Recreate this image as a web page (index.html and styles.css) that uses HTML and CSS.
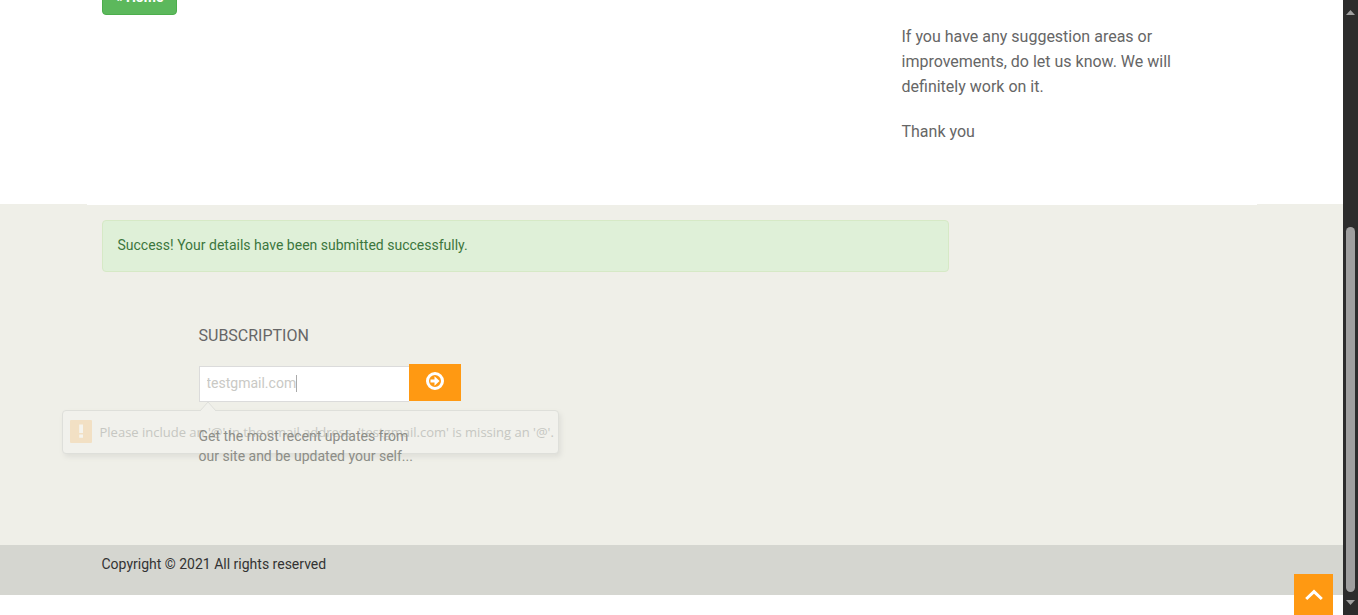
FILE: index.html
```html
<!DOCTYPE html>
<html lang="en">
<head>
<meta charset="utf-8">
<meta name="viewport" content="width=device-width, initial-scale=1">
<title>Feedback</title>
<link rel="stylesheet" href="styles.css">
</head>
<body>
<div class="window">
  <div class="page">
    <main class="top">
      <div class="container intro">
        <div class="intro-main"><button class="btn-home" type="button">« Home</button></div>
        <div class="intro-side">
          <p>If you have any suggestion areas or improvements, do let us know. We will definitely work on it.</p>
          <p>Thank you</p>
        </div>
      </div>
    </main>
    <section class="band">
      <div class="container">
        <div class="alert" role="alert">Success! Your details have been submitted successfully.</div>
        <div class="subscription">
          <h2><label for="email">SUBSCRIPTION</label></h2>
          <form class="subscribe" novalidate>
            <input id="email" class="email" type="email" value="testgmail.com">
            <span class="caret"></span>
            <button class="send" type="button" aria-label="Subscribe">
              <svg width="18" height="18" viewBox="0 0 18 18"><circle cx="9" cy="9" r="7.5" fill="none" stroke="#fff" stroke-width="3"/><path d="M4.5 7.5h4V4.2L13.6 9l-5.1 4.8v-3.3h-4z" fill="#fff"/></svg>
            </button>
            <div class="bubble">
              <svg class="bubble-tip" width="18" height="10" viewBox="0 0 18 10"><path d="M1 10 9 1l8 9" fill="#f1f1ec" stroke="#dedfda"/></svg>
              <svg width="22" height="23" viewBox="0 0 22 23"><rect width="22" height="23" rx="1" fill="#f2e0c4"/><path d="M9.2 4.5h3.8v8.5H9.2zM9.2 14.5h3.8v3.3H9.2z" fill="#f5f4ee"/></svg>
              <span class="bubble-text">Please include an '@' in the email address. 'testgmail.com' is missing an '@'.</span>
            </div>
          </form>
          <p class="note">Get the most recent updates from<br>our site and be updated your self...</p>
        </div>
      </div>
    </section>
    <footer class="footer"><div class="container footer-text">Copyright © 2021 All rights reserved</div></footer>
    <a class="to-top" href="#" aria-label="Back to top">
      <svg width="20" height="12" viewBox="0 0 20 12"><path d="M2.2 10 10 2.6l7.8 7.4" fill="none" stroke="#fff" stroke-width="3"/></svg>
    </a>
  </div>
  <div class="scrollbar" aria-hidden="true">
    <svg width="9" height="5" viewBox="0 0 9 5"><path d="M0 5 4.5 0 9 5z" fill="#9f9f9f"/></svg>
    <div class="track"><div class="thumb"></div></div>
    <svg width="9" height="5" viewBox="0 0 9 5"><path d="M0 0h9L4.5 5z" fill="#9f9f9f"/></svg>
  </div>
</div>
</body>
</html>
```
FILE: styles.css
```css
* { box-sizing: border-box; }

body {
  margin: 0;
  background: #fff;
  color: #666;
  font: 14px/20px Roboto, sans-serif;
}

.window {
  display: flex;
  height: 100vh;
  overflow: hidden;
}

.page {
  position: relative;
  flex: 1;
  overflow: hidden;
}

.container {
  max-width: 1170px;
  margin: 0 auto;
  padding: 0 15px;
}

/* The page is scrolled: its first row is partly above the window. */
.intro {
  position: relative;
  display: grid;
  grid-template-columns: 2fr 1fr;
  margin-top: -19px;
  margin-bottom: -1px;
  padding: 0;
  background: #fff;
}

.intro-main { padding: 0 15px; }

.intro-side {
  padding: 43px 60px 41px 35px;
  font-size: 16px;
  line-height: 25px;
}

.intro-side p { margin: 0 0 20px; }

.btn-home {
  height: 34px;
  padding: 0 13px 2px;
  border: 1px solid #4cae4c;
  border-radius: 4px;
  background: #5cb85c;
  color: #fff;
  font: 700 14px/20px Roboto, sans-serif;
}

.band {
  padding: 16px 0 78px;
  background: #efefe8;
}

.alert {
  width: calc(75% - 8px);
  padding: 14px 15px 16px;
  border: 1px solid #d6e9c6;
  border-radius: 4px;
  background: #dff0d8;
  color: #3c763d;
}

.subscription {
  width: 262px;
  margin: 54px 0 0 97px;
}

.subscription h2 {
  margin: 0 0 18px;
  font-size: 16px;
  font-weight: 400;
  line-height: 20px;
}

.subscribe {
  position: relative;
  display: flex;
  align-items: flex-start;
}

.email {
  flex: 1;
  min-width: 0;
  height: 36px;
  margin-top: 2px;
  padding: 0 7px 2px;
  border: 1px solid #dbdbdb;
  border-right: 0;
  border-radius: 0;
  background: #fff;
  color: #c9c9c5;
  font: 14px/20px Roboto, sans-serif;
}

.caret {
  position: absolute;
  top: 11px;
  left: 97px;
  width: 1px;
  height: 17px;
  background: #aaa;
}

.send {
  display: flex;
  align-items: center;
  justify-content: center;
  width: 52px;
  height: 37px;
  padding: 0 0 3px;
  border: 0;
  background: #ff9912;
}

.bubble {
  position: absolute;
  top: 46px;
  left: -137px;
  display: flex;
  align-items: center;
  gap: 8px;
  height: 44px;
  padding: 0 4px 2px 7px;
  border: 1px solid #dedfda;
  border-radius: 4px;
  background: #f1f1ec;
  box-shadow: 2px 3px 5px #dfdfd9;
  color: #c6c7c2;
  font: 13px/20px "Open Sans", sans-serif;
  white-space: nowrap;
}

.bubble-text { padding-top: 2px; }

.bubble-tip {
  position: absolute;
  top: -10px;
  left: 136px;
}

.note {
  position: relative;
  margin: 24px 0 0;
  color: #8c8d87;
}

.footer {
  height: 50px;
  margin-top: 1px;
  background: #d5d6d0;
  color: #333;
}

.band + .footer { margin-top: 0; }

.band { padding-bottom: 79px; }

.footer-text {
  padding-top: 9px;
}

.to-top {
  position: absolute;
  right: 10px;
  bottom: 0;
  display: flex;
  align-items: center;
  justify-content: center;
  width: 39px;
  height: 41px;
  background: #ff9912;
}

.scrollbar {
  display: flex;
  flex-direction: column;
  align-items: center;
  width: 15px;
  padding: 10px 0;
  background: #2c2c2c;
}

.track {
  flex: 1;
  width: 9px;
  padding: 212px 0 8px;
}

.thumb {
  height: 100%;
  border-radius: 5px;
  background: #9f9f9f;
}
```
